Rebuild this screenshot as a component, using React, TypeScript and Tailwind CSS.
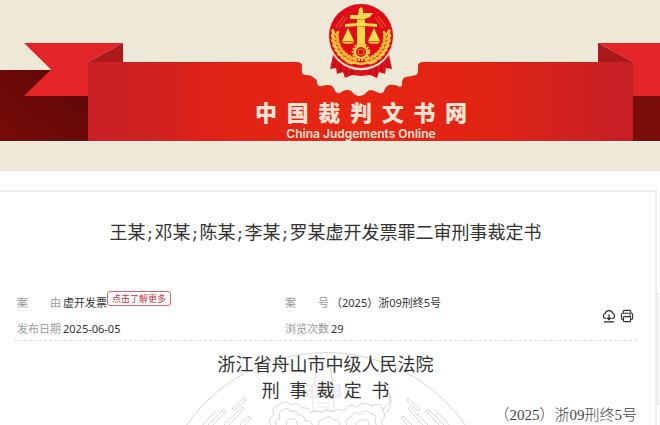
import React from 'react';

const parties = ['王某', '邓某', '陈某', '李某', '罗某虚开发票罪二审刑事裁定书'];

// leaf positions of the wheat ears, measured along the emblem's rim
const leaves = [-8, 2, 12, 22, 32, 42, 52, 62, 72];

const Ribbon: React.FC = () => (
  <svg
    className="absolute inset-0 h-full w-full"
    viewBox="0 0 660 171"
    preserveAspectRatio="xMidYMid slice"
    aria-hidden="true"
  >
    <defs>
      <linearGradient id="band" x1="0" x2="1" y1="0" y2="0">
        <stop offset="0" stopColor="#c92025" />
        <stop offset="0.13" stopColor="#d12120" />
        <stop offset="0.24" stopColor="#e12317" />
        <stop offset="0.5" stopColor="#e72612" />
        <stop offset="0.74" stopColor="#e12315" />
        <stop offset="0.88" stopColor="#d12120" />
        <stop offset="1" stopColor="#c51f25" />
      </linearGradient>
      <linearGradient id="shade" x1="0" x2="1" y1="1" y2="0">
        <stop offset="0" stopColor="#780b09" />
        <stop offset="1" stopColor="#5c0807" />
      </linearGradient>
    </defs>
    <rect y="70" width="88" height="71" fill="url(#shade)" />
    <rect x="633" y="90" width="27" height="51" fill="#7a0d0a" />
    <path d="M24 43H123L88 62V96H24L51 69.5Z" fill="#e32428" />
    <path d="M123 43V62H88Z" fill="#ac191d" />
    <path d="M598 43H660V96H633V62Z" fill="#e32428" />
    <path d="M598 43V62H633Z" fill="#ac191d" />
    <path
      d="M88 62H297Q302 62 302 66V73Q303 75 306 75Q312 75 314 78Q318 80 317 83Q318 87 322 86Q328 84 332 86Q335 88 335 91Q337 94 340 93Q345 89 349 90Q352 91 354 94Q357 96 359 96Q362 96 365 94Q368 90 371 90Q375 91 379 93Q383 94 384 91Q386 86 389 85Q395 84 400 87Q403 86 402 82Q402 78 406 77Q412 76 416 75Q418 74 418 70V66Q418 62 423 62H633V141H88Z"
      fill="url(#band)"
    />
    <path d="M0 141.5H660" stroke="#fbf8ef" />
  </svg>
);

const Emblem: React.FC = () => (
  <svg className="h-[78px] w-[68px]" viewBox="0 0 68 78" aria-hidden="true">
    <path
      d="M6 53L3 67L9 66L10 72L16 70L18 76L25 73L34 74L43 73L50 76L52 70L58 72L59 66L65 67L62 53Z"
      fill="#d9121d"
    />
    <path d="M9 58L7 66M14 61L13 70M19 64V73M25 66V73M43 66V73M49 64V73M54 61L55 70M59 58L61 66" stroke="#a50e18" fill="none" />
    <circle cx="34" cy="35" r="33.2" fill="#f6dfcb" />
    <circle cx="34" cy="34" r="32" fill="#de0b18" />
    <path d="M9 25L17 14M12 26L20 15M51 14L59 25M48 15L56 26" stroke="#e8542c" strokeWidth="1.2" />
    {[1, -1].map((side) => (
      <g key={side} transform={side === 1 ? undefined : 'translate(68 0) scale(-1 1)'}>
        {leaves.map((angle) => (
          <g key={angle} transform={`rotate(${-angle} 34 34)`}>
            <ellipse cx="6" cy="34" rx="1.7" ry="3.3" fill="#f5c73e" transform="rotate(-25 6 34)" />
            <ellipse cx="10" cy="35" rx="1.6" ry="3.2" fill="#efb32f" transform="rotate(25 10 35)" />
          </g>
        ))}
        <path d="M21 26L15 39H27Z" fill="#fbdc52" />
        <path d="M14.5 39.5H27.5Q26 42 21 42T14.5 39.5" fill="#f4b92f" />
      </g>
    ))}
    <path
      d="M32 7L34 5L36 7V11L46 11L43 15L38 17V21L50 22V25L38 24V50H30V24L18 25V22L30 21V17L23 17V13L31 13Z"
      fill="#fbd94b"
    />
    <path d="M30 17.5H38M30 24.5H38" stroke="#e39a25" />
    <circle cx="34" cy="50" r="8" fill="none" stroke="#f7c63c" strokeWidth="2.4" strokeDasharray="2.2 1.2" />
    <circle cx="34" cy="50" r="6" fill="#de0b18" stroke="#fbd94b" strokeWidth="2.2" />
    <circle cx="34" cy="50" r="3" fill="none" stroke="#efab2d" strokeWidth="0.8" />
    <path d="M20 60Q27 60 34 62Q41 60 48 60" fill="none" stroke="#f5c73e" strokeWidth="2.4" />
  </svg>
);

const Watermark: React.FC = () => (
  <svg
    className="absolute top-[2px] left-1/2 h-[84px] w-[300px] -translate-x-1/2"
    viewBox="0 0 300 84"
    fill="none"
    stroke="#d6d6d6"
    aria-hidden="true"
  >
    <circle cx="150" cy="180" r="170.5" />
    <path d="M25 84Q31 76 39 69M275 84Q269 76 261 69" />
    {[1, -1].map((side) => (
      <g key={side} transform={side === 1 ? undefined : 'translate(300 0) scale(-1 1)'}>
        <path d="M30 84L48 66L50 68L35 84M46 84L66 64L68 66L51 84M62 84L73 73L75 75L67 84M56 66L68 55L70 57L58 68Z" />
      </g>
    ))}
    <path d="M141 22L137 50M154 22L158 50" />
    <g stroke="#e2e2e2">
      <path d="M128 42H164V54H128ZM128 48H164M136 42V54M146 42V54M156 42V54" fill="#f5f6f7" />
      <path d="M137 54V68H158V54M142 60H153M142 64H153" />
    </g>
    <path d="M96 84Q90 76 98 72Q94 64 103 62Q109 56 115 62Q123 59 126 65Q134 64 134 70Q142 66 146 70Q151 64 157 69Q163 64 168 68Q174 59 181 64Q188 57 195 63Q206 58 207 68Q212 73 205 77L207 84" />
    <path d="M101 84Q97 77 104 76Q101 69 107 67Q112 63 115 69Q121 66 122 72Q129 71 129 78Q135 75 137 84M111 84Q108 76 115 76Q121 74 122 84M143 84Q141 76 148 76Q153 71 158 77Q164 75 164 84M171 84Q168 76 175 74Q178 67 184 71Q191 65 195 71Q202 71 199 78L201 84M180 84Q179 78 186 77Q194 76 193 84M206 67Q217 60 213 50Q218 59 211 70" />
  </svg>
);

const MetaItem: React.FC<{ label: string; children: React.ReactNode }> = ({ label, children }) => (
  <div className="flex items-start">
    <dt className="w-[46px] whitespace-nowrap text-[#999]">{label}</dt>
    <dd className="flex items-start whitespace-nowrap">{children}</dd>
  </div>
);

const App: React.FC = () => {
  return (
    <div className="min-h-screen bg-white font-['Noto_Sans','Noto_Sans_CJK_SC',sans-serif] text-[#333]">
      <header className="relative flex h-[171px] flex-col items-center overflow-hidden bg-[#eee8d9] pt-[2px] pl-[62px]">
        <Ribbon />
        <div className="relative flex w-[212px] flex-col items-center text-[#fbe3d3]">
          <Emblem />
          <h2 className="mt-[17px] w-full text-[22px] leading-[30px] font-black [text-align-last:justify]">
            中国裁判文书网
          </h2>
          <p className="font-['Inter',sans-serif] text-[12px] leading-[14px] font-semibold">
            China Judgements Online
          </p>
        </div>
      </header>

      <div className="flex items-start pt-[19px]">
        <main className="flex-1 border-t-2 border-r-2 border-[#eee] pr-[18px] pl-[14px]">
          <h1 className="pt-[26px] text-center text-[18px] leading-[28px]">
            {parties.map((party, index) => (
              <React.Fragment key={index}>
                {index > 0 && <span className="font-['Liberation_Mono',monospace] text-[15px]">;</span>}
                {party}
              </React.Fragment>
            ))}
          </h1>

          <div className="mt-[42px] flex items-center border-b border-dashed border-[#ddd] pl-[3px]">
            <dl className="grid flex-1 grid-cols-2 gap-y-1 text-[11px] leading-[22px]">
              <MetaItem label="案　　由">
                虚开发票
                <button
                  type="button"
                  className="-mt-px h-[15px] rounded-[3px] border border-[#d9646a] px-1 text-[9px] leading-[13px] text-[#c9353c]"
                >
                  点击了解更多
                </button>
              </MetaItem>
              <MetaItem label="案　　号">（2025）浙09刑终5号</MetaItem>
              <MetaItem label="发布日期">2025-06-05</MetaItem>
              <MetaItem label="浏览次数">29</MetaItem>
            </dl>
            <div className="flex w-[84px] justify-end gap-1 pr-[3px]">
              <button type="button" aria-label="下载">
                <svg className="size-[14px]" viewBox="0 0 14 14" fill="none" stroke="#222" strokeWidth="1.2">
                  <path d="M4.5 9.5H3.6A2.7 2.7 0 0 1 3.2 4.3A4 4 0 0 1 10.8 4.3A2.7 2.7 0 0 1 10.4 9.5H9.5" />
                  <path d="M7 5.5V10.5M5 8.6L7 10.6L9 8.6M2 12.9H12" />
                </svg>
              </button>
              <button type="button" aria-label="打印">
                <svg className="size-[14px]" viewBox="0 0 14 14" fill="none" stroke="#333" strokeWidth="1.1">
                  <path d="M3.2 4V2.6Q3.2 1.4 4.4 1.4H9.6Q10.8 1.4 10.8 2.6V4" />
                  <path d="M3.4 10.4H2.6Q1.4 10.4 1.4 9.2V5.4Q1.4 4.2 2.6 4.2H11.4Q12.6 4.2 12.6 5.4V9.2Q12.6 10.4 11.4 10.4H10.6" />
                  <rect x="3.4" y="7.6" width="7.2" height="5" rx="0.8" />
                  <path d="M9 6H10.8" />
                </svg>
              </button>
            </div>
          </div>

          <article className="relative overflow-hidden pt-[10px]">
            <Watermark />
            <div className="relative text-center text-[18px] leading-[26px]">
              <p>浙江省舟山市中级人民法院</p>
              <p>刑&nbsp;&nbsp;事&nbsp;&nbsp;裁&nbsp;&nbsp;定&nbsp;&nbsp;书</p>
            </div>
            <p className="relative pt-[2px] text-right font-['Liberation_Serif','Noto_Sans_CJK_SC',serif] text-[15px] leading-[20px] font-light text-[#444]">
              （2025）浙09刑终5号
            </p>
          </article>
        </main>
        <aside className="mt-[103px] h-[112px] w-[3px] border-y border-l border-[#e8e8e8] bg-[#f7f7f7]" />
      </div>
    </div>
  );
};

export default App;
